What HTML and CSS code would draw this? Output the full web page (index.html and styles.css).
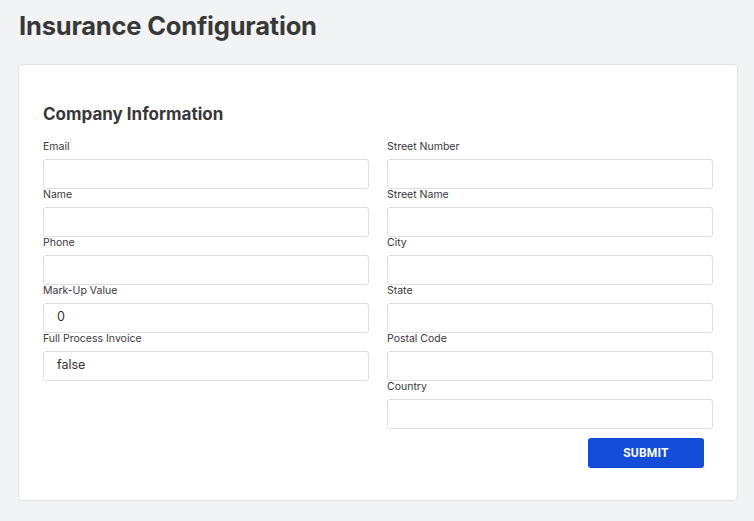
FILE: index.html
```html
<!DOCTYPE html>
<html lang="en">
<head>
<meta charset="utf-8">
<title>Insurance Configuration</title>
<link rel="stylesheet" href="styles.css">
</head>
<body>
<main class="page">
  <h1 class="page-title">Insurance Configuration</h1>
  <section class="card">
    <h2 class="section-title">Company Information</h2>
    <form class="form">
      <div class="col">
        <label class="field"><span class="label">Email</span><input class="input" type="text"></label>
        <label class="field"><span class="label">Name</span><input class="input" type="text"></label>
        <label class="field"><span class="label">Phone</span><input class="input" type="text"></label>
        <label class="field"><span class="label">Mark-Up Value</span><input class="input" type="text" value="0"></label>
        <label class="field"><span class="label">Full Process Invoice</span><input class="input" type="text" value="false"></label>
      </div>
      <div class="col">
        <label class="field"><span class="label">Street Number</span><input class="input" type="text"></label>
        <label class="field"><span class="label">Street Name</span><input class="input" type="text"></label>
        <label class="field"><span class="label">City</span><input class="input" type="text"></label>
        <label class="field"><span class="label">State</span><input class="input" type="text"></label>
        <label class="field"><span class="label">Postal Code</span><input class="input" type="text"></label>
        <label class="field"><span class="label">Country</span><input class="input" type="text"></label>
        <div class="actions"><button class="submit" type="button">SUBMIT</button></div>
      </div>
    </form>
  </section>
</main>
</body>
</html>
```

FILE: styles.css
```css
* { box-sizing: border-box; }
html, body { margin: 0; padding: 0; }
body {
  background: #f2f3f5;
  font-family: Inter, "Noto Sans", sans-serif;
  color: #333;
}
.page {
  padding: 9px 16px 20px 18px;
}
.page-title {
  margin: 0 0 21px 1px;
  font-size: 25.5px;
  line-height: 34px;
  font-weight: 700;
  color: #383838;
  letter-spacing: -0.2px;
}
.card {
  width: 720px;
  background: #fff;
  border: 1px solid #e2e3e6;
  border-radius: 5px;
  padding: 38px 24px 32px 24px;
}
.section-title {
  margin: 0 0 16px 0;
  font-size: 17px;
  line-height: 22px;
  font-weight: 700;
  color: #383838;
}
.form {
  display: grid;
  grid-template-columns: 326px 326px;
  column-gap: 18px;
  align-items: start;
}
.col {
  display: flex;
  flex-direction: column;
}
.field {
  display: flex;
  flex-direction: column;
}
.label {
  font-size: 10.5px;
  line-height: 12px;
  color: #3b3640;
  margin-bottom: 6px;
}
.input {
  height: 30px;
  width: 100%;
  border: 1px solid #dedfe2;
  border-radius: 3px;
  padding: 0 13px 3px 13px;
  font-family: inherit;
  font-size: 12.5px;
  color: #333;
  background: #fff;
  outline: none;
}
.actions {
  display: flex;
  justify-content: flex-end;
  padding-right: 9px;
  margin-top: 9px;
}
.submit {
  width: 116px;
  height: 30px;
  border: none;
  border-radius: 3px;
  background: #134cd8;
  color: #fff;
  font-family: Roboto, Inter, sans-serif;
  font-weight: 700;
  font-size: 12px;
  letter-spacing: 0.2px;
}
```
